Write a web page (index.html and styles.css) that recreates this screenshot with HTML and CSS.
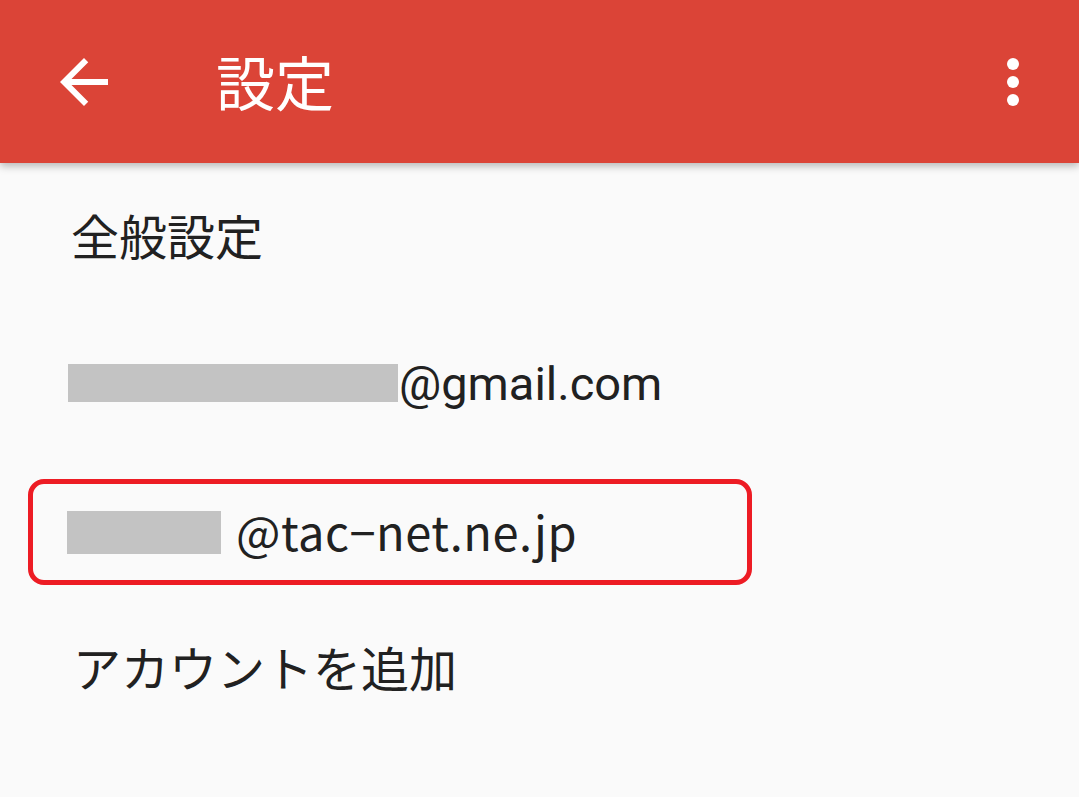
FILE: index.html
```html
<!DOCTYPE html>
<html lang="ja">

<head>
  <meta charset="UTF-8">
  <meta name="viewport" content="width=device-width, initial-scale=1.0">
  <title>設定</title>
  <link rel="stylesheet" href="styles.css">
</head>

<body>
  <header class="toolbar">
    <svg class="toolbar-icon" viewBox="0 0 24 24" width="72" height="72">
      <path d="M20 11H7.83l5.59-5.59L12 4l-8 8 8 8 1.41-1.41L7.83 13H20v-2z" fill="#fff" />
    </svg>
    <h1 class="toolbar-title">設定</h1>
    <svg class="toolbar-menu" viewBox="0 0 24 24" width="72" height="72">
      <circle cx="12" cy="6" r="2" fill="#fff" />
      <circle cx="12" cy="12" r="2" fill="#fff" />
      <circle cx="12" cy="18" r="2" fill="#fff" />
    </svg>
  </header>

  <ul class="settings-list">
    <li class="settings-item">
      <span class="label-ja label-general">全般設定</span>
    </li>
    <li class="settings-item">
      <span class="mask mask-gmail"></span>
      <span class="label-mail">@gmail.com</span>
    </li>
    <li class="settings-item settings-item-marked">
      <span class="mask mask-tac"></span>
      <span class="label-tac">@tac−net.ne.jp</span>
      <span class="marker"></span>
    </li>
    <li class="settings-item">
      <span class="label-ja label-add">アカウントを追加</span>
    </li>
  </ul>
</body>

</html>
```

FILE: styles.css
```css
body {
  margin: 0;
  background-color: #fafafa;
  font-family: Roboto, "Noto Sans CJK JP", sans-serif;
  color: #212121;
  width: 1079px;
  height: 797px;
  overflow: hidden;
}

.toolbar {
  display: flex;
  align-items: center;
  height: 163px;
  padding-left: 48px;
  padding-right: 30px;
  background-color: #db4437;
  box-shadow: 0 3px 8px rgba(0, 0, 0, 0.28);
  position: relative;
  z-index: 1;
  box-sizing: border-box;
}

.toolbar-icon {
  flex: none;
}

.toolbar-title {
  margin: -2px 0 0 96px;
  font-family: "Noto Sans CJK JP", sans-serif;
  font-weight: normal;
  font-size: 59px;
  color: #fff;
  flex: 1;
}

.toolbar-menu {
  flex: none;
}

.settings-list {
  list-style: none;
  margin: 0;
  padding: 3px 0 0;
}

.settings-item {
  display: flex;
  align-items: center;
  height: 145px;
  padding-left: 68px;
  position: relative;
}

.label-ja {
  font-family: "Noto Sans CJK JP", sans-serif;
  font-size: 48px;
  margin-left: 3px;
}

.label-general {
  margin-top: -10px;
}

.label-add {
  margin-left: 5px;
  margin-top: -16px;
}

.mask {
  display: block;
  background-color: #c3c3c3;
  flex: none;
}

.mask-gmail {
  width: 330px;
  height: 38px;
  margin-top: -2px;
}

.label-mail {
  font-size: 47px;
  margin-left: 1px;
}

.mask-tac {
  width: 154px;
  height: 43px;
  margin-left: -1px;
  margin-top: 8px;
}

.label-tac {
  font-family: "Noto Sans CJK JP", sans-serif;
  font-size: 47px;
  letter-spacing: 0.5px;
  margin-left: 15px;
  margin-top: 4px;
}

.marker {
  position: absolute;
  left: 28px;
  top: 23px;
  width: 724px;
  height: 106px;
  border: 5px solid #ed1c24;
  border-radius: 16px;
  box-sizing: border-box;
}
```
